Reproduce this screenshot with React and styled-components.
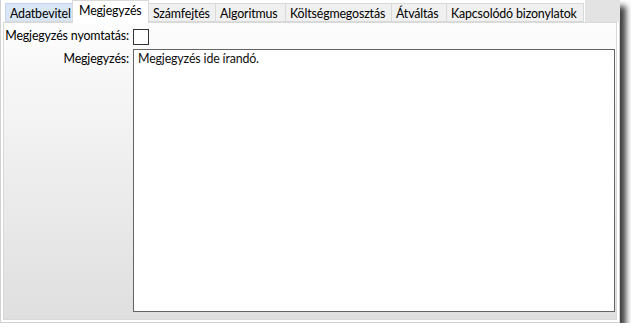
import React from "react";
import styled, { createGlobalStyle } from "styled-components";

const FONT = `"Lato", "Noto Sans", sans-serif`;

const Global = createGlobalStyle`
  html, body { margin: 0; padding: 0; background: #ffffff; }
  body { font-family: ${FONT}; font-size: 12.4px; letter-spacing: -0.15px; color: #000; }
  * { box-sizing: border-box; }
`;

const Window = styled.div`
  width: 620px;
  height: 323px;
  display: flex;
  flex-direction: column;
  background: #ffffff;
  border: 1px solid #d2d2d2;
  border-top: none;
  box-shadow: 6px 6px 6px rgba(0, 0, 0, 0.75);
`;

const TabStrip = styled.div`
  height: 22px;
  display: flex;
  align-items: flex-end;
  padding-left: 4px;
  position: relative;
  z-index: 1;
`;

const Tab = styled.div`
  width: ${(p) => p.$w}px;
  height: ${(p) => (p.$active ? 23 : 19)}px;
  margin: ${(p) => (p.$active ? "0 -1px -1px -1px" : "0")};
  padding: ${(p) => (p.$active ? "2px 0 0 6px" : "2px 0 0 4px")};
  display: flex;
  align-items: flex-start;
  white-space: nowrap;
  line-height: 15px;
  background: ${(p) => (p.$active ? "#ffffff" : p.$hover ? "#d8e6f5" : "#f0f0f0")};
  border: 1px solid ${(p) => (p.$hover ? "#c3d6ec" : "#d9d9d9")};
  border-bottom: ${(p) => (p.$active ? "none" : "1px solid #d9d9d9")};
  border-left: ${(p) => (p.$noLeft ? "none" : undefined)};
  position: relative;
  z-index: ${(p) => (p.$active ? 2 : 1)};
`;

const Filler = styled.div`
  flex: 1;
  align-self: stretch;
  background: #e3e3e3;
  margin-right: -1px;
  margin-left: 1px;
`;

const Panel = styled.div`
  flex: 1;
  margin: 0 2px 2px 2px;
  border: 1px solid #d9d9d9;
  background: linear-gradient(to bottom, #fdfdfd 0%, #f2f2f2 35%, #dfdfdf 100%);
  display: grid;
  grid-template-columns: 125px 1fr;
  grid-template-rows: 17px 1fr;
  column-gap: 4px;
  row-gap: 4px;
  padding: 5px 1px 7px 0;
`;

const Label = styled.div`
  text-align: right;
  white-space: nowrap;
  line-height: 16px;
  padding-top: ${(p) => p.$top || 0}px;
`;

const CheckBox = styled.div`
  width: 16px;
  height: 16px;
  border: 1px solid #333333;
  background: #ffffff;
  margin-top: 1px;
`;

const Note = styled.textarea`
  width: 100%;
  height: 100%;
  resize: none;
  border: 1px solid #646464;
  background: #ffffff;
  font-family: ${FONT};
  font-size: 12.4px;
  letter-spacing: -0.15px;
  line-height: 16px;
  color: #101010;
  padding: 1px 4px;
  margin: 0;
  outline: none;
  overflow: hidden;
`;

const tabs = [
  { t: "Adatbevitel", w: 68, hover: true },
  { t: "Megjegyzés", w: 77, active: true },
  { t: "Számfejtés", w: 68 },
  { t: "Algoritmus", w: 70 },
  { t: "Költségmegosztás", w: 106 },
  { t: "Átváltás", w: 55 },
  { t: "Kapcsolódó bizonylatok", w: 137 },
];

export default function App() {
  return (
    <>
      <Global />
      <Window>
        <TabStrip>
          {tabs.map((x, i) => (
            <Tab
              key={x.t}
              $w={x.w}
              $active={x.active}
              $hover={x.hover}
              $noLeft={i > 0 && !x.active && !tabs[i - 1].active}
            >
              {x.t}
            </Tab>
          ))}
          <Filler />
        </TabStrip>
        <Panel>
          <Label>Megjegyzés nyomtatás:</Label>
          <CheckBox />
          <Label $top={2}>Megjegyzés:</Label>
          <Note defaultValue="Megjegyzés ide írandó." />
        </Panel>
      </Window>
    </>
  );
}
